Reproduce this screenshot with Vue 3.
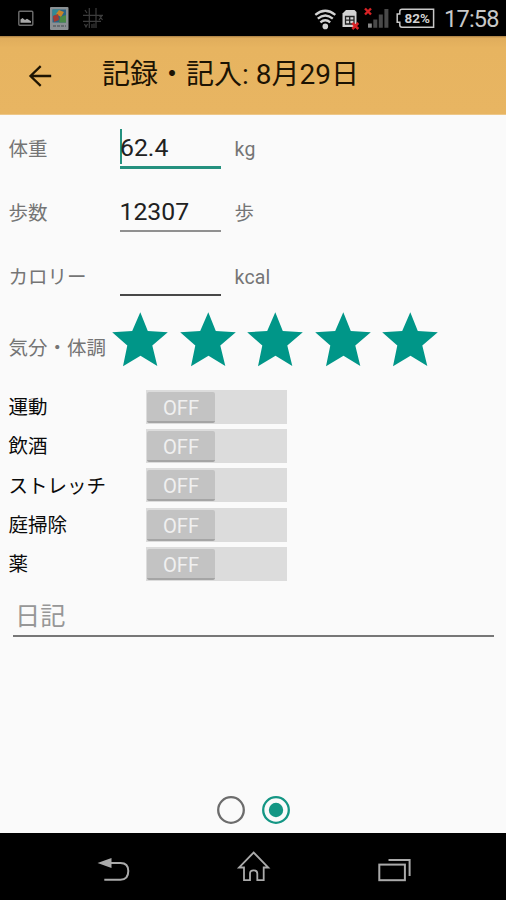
<script setup>
import { ref } from 'vue'

const fields = ref([
  { label: '体重', value: '62.4', unit: 'kg', state: 'focused' },
  { label: '歩数', value: '12307', unit: '歩', state: 'filled' },
  { label: 'カロリー', value: '', unit: 'kcal', state: 'empty' },
])
const habits = ref(['運動', '飲酒', 'ストレッチ', '庭掃除', '薬'])
const rating = ref(5)
</script>

<template>
  <div class="screen">
    <header class="status">
      <svg class="status-left" width="110" height="36" viewBox="0 0 110 36">
        <rect x="18.8" y="11.3" width="14" height="14" rx="1" fill="none" stroke="#6e6e6e" stroke-width="1.4" />
        <path d="M20.5 22.8V19.5L22.5 18L25 20L27 18.8L31 21.3V22.8Z" fill="#aaa" />
        <rect x="50" y="7" width="18.5" height="23" rx="1" fill="#8b9093" />
        <rect x="52.5" y="9.5" width="13.5" height="13" fill="#2a6488" />
        <path d="M52.5 9.5H60L57 15L52.5 16Z" fill="#318a96" />
        <path d="M59 10L64 12L61 17L56 14Z" fill="#c98427" />
        <path d="M53 16L58 14L59 20L54 22Z" fill="#a53a30" />
        <path d="M60 17L66 15V22.5H59Z" fill="#4a8a45" />
        <path d="M53 26H66" stroke="#666c70" stroke-width="1.8" stroke-dasharray="3 1" />
        <g stroke="#3c3c3c" stroke-width="1.2" fill="none">
          <path d="M83 15.3H103M83 21.3H101M89.3 8V28M96 8V28M99 15L102.5 20M102.5 15L99 20M85 10L87 13M84.5 24L86 27L87.5 24M92 24V28M94 23.5V28" />
        </g>
      </svg>
      <svg class="status-icons" width="140" height="36" viewBox="300 0 140 36">
        <g fill="none" stroke="#d2d2d2" stroke-width="2.3">
          <path d="M315.3 14.8Q325.3 6.8 335.3 14.8" />
          <path d="M317.8 18.7Q325.3 12.3 332.8 18.7" />
          <path d="M320.4 22.4Q325.3 18.1 330.2 22.4" />
        </g>
        <circle cx="325.3" cy="26.4" r="2.8" fill="#d2d2d2" />
        <path d="M346 10H354.5L356.5 12V27H342.5V13.5Z" fill="#d2d2d2" />
        <path d="M345.5 16.5H354V24H345.5ZM345.5 20.2H354M349.7 16.5V24" fill="none" stroke="#222" stroke-width="1.3" />
        <path d="M352.3 23L358.3 29M358.3 23L352.3 29" stroke="#d82225" stroke-width="2.5" />
        <path d="M365 8.5L371 14.5M371 8.5L365 14.5" stroke="#d82225" stroke-width="2.4" />
        <rect x="368" y="23.5" width="3.8" height="4.2" fill="#888" />
        <path d="M373.3 27.7V19.5H377.3V27.7ZM378.8 27.7V14.5H382.8V27.7ZM384.4 27.7V9H388.4V27.7Z" fill="#494949" />
        <path d="M402 9.2H433.6V27.2H402Q399.8 27.2 399.8 25V22.2H397.2V14H399.8V11.4Q399.8 9.2 402 9.2Z" fill="none" stroke="#c8c8c8" stroke-width="1.5" />
        <text class="battery" x="417.3" y="23.4" text-anchor="middle">82%</text>
      </svg>
      <span class="clock">17:58</span>
    </header>

    <div class="appbar">
      <svg class="back" width="24" height="24" viewBox="0 0 24 24">
        <path d="M23.2 12H2.5M12.7 2.2L2.5 12L12.7 21.8" fill="none" stroke="#1f1503" stroke-width="2.3" />
      </svg>
      <h1>記録・記入: 8月29日</h1>
    </div>

    <main>
      <div v-for="f in fields" :key="f.label" class="field">
        <span class="label">{{ f.label }}</span>
        <div class="input" :class="f.state"><span>{{ f.value }}</span></div>
        <span class="unit">{{ f.unit }}</span>
      </div>

      <div class="mood">
        <span class="label">気分・体調</span>
        <div class="stars">
          <svg v-for="n in rating" :key="n" width="56" height="56" viewBox="0 0 56 56">
            <path d="M28.3 .3L35.8 19L55.8 20.2L40.3 33.5L45.3 54L28.5 43.7L11 54.2L15.3 33.5L.2 20.2L20.2 19Z" fill="#009688" />
          </svg>
        </div>
      </div>

      <div class="habits">
        <div v-for="h in habits" :key="h" class="habit">
          <span>{{ h }}</span>
          <div class="switch"><div class="thumb">OFF</div></div>
        </div>
      </div>

      <div class="diary">日記</div>

      <div class="pages">
        <svg width="28" height="28" viewBox="0 0 28 28">
          <circle cx="14" cy="14" r="12.8" fill="none" stroke="#6c6c6c" stroke-width="2.3" />
        </svg>
        <svg width="28" height="28" viewBox="0 0 28 28">
          <circle cx="14" cy="14" r="12.8" fill="none" stroke="#149684" stroke-width="2.3" />
          <circle cx="14" cy="14" r="7.2" fill="#149684" />
        </svg>
      </div>
    </main>

    <nav>
      <svg width="506" height="67" viewBox="0 833 506 67">
        <g fill="none" stroke="#aaa" stroke-width="2">
          <path d="M109 863H120.5Q128.3 863 128.3 871Q128.3 879.7 120.5 879.7H104.3" />
          <path d="M253.6 852.5L268.3 867.5H263.7V880.2H257.3V873.5Q257.3 870.3 253.6 870.3Q250 870.3 250 873.5V880.2H244V867.5H239Z" stroke-width="1.8" />
          <rect x="379.3" y="864.6" width="25.6" height="15.6" />
          <path d="M388.5 860H409.6V876" />
        </g>
        <path d="M97.5 863L111.5 858V868Z" fill="#aaa" />
      </svg>
    </nav>
  </div>
</template>

<style>
body {
  margin: 0;
  background: #fafafa;
}
</style>

<style scoped>
.screen {
  display: flex;
  flex-direction: column;
  width: 506px;
  height: 900px;
  overflow: hidden;
  background: #fafafa;
  font-family: Roboto, "Noto Sans CJK JP", sans-serif;
}
svg {
  display: block;
  flex: none;
}
.status {
  display: flex;
  flex: none;
  height: 36px;
  background: #000;
}
.status-icons {
  margin-left: 190px;
}
.battery {
  font-size: 13.5px;
  font-weight: 700;
  fill: #d2d2d2;
}
.clock {
  margin-left: 4px;
  color: #c8c8c8;
  font-size: 23.5px;
  line-height: 39px;
  letter-spacing: -0.75px;
  white-space: nowrap;
}
.appbar {
  display: flex;
  flex: none;
  box-sizing: border-box;
  height: 79px;
  padding: 0 28px;
  background: linear-gradient(#a37b43 0, #e0ad5c 2px, #e7b460 12px, #e8b562 78px, #f3d9ae 79px);
}
.back {
  margin-top: 27.5px;
}
h1 {
  margin: 0 0 0 50px;
  color: #1c1303;
  font-size: 28px;
  font-weight: 400;
  line-height: 78px;
  white-space: nowrap;
}
main {
  display: flex;
  flex: 1;
  flex-direction: column;
}
.field {
  display: grid;
  grid-template-columns: 111px 101px 1fr;
  height: 64px;
  padding-left: 8.5px;
}
.label,
.unit {
  color: #757575;
  font-size: 19.5px;
  line-height: 70px;
  white-space: nowrap;
}
.unit {
  padding-left: 14px;
  letter-spacing: 0.2px;
}
.input {
  box-sizing: border-box;
  height: 53px;
  border-bottom: 2px solid #909090;
  color: #212121;
  font-size: 24.8px;
  line-height: 65px;
}
.input.empty {
  border-bottom-color: #484848;
}
.input.focused {
  height: 54px;
  border-bottom: 3px solid #24917f;
}
.input.focused span {
  display: block;
  height: 35px;
  margin-top: 14px;
  border-left: 2px solid #24917f;
  line-height: 38px;
  text-indent: -1.5px;
}
.mood {
  display: flex;
  height: 82px;
  padding-left: 8.5px;
}
.mood .label {
  width: 103.5px;
  line-height: 83px;
}
.stars {
  display: flex;
  gap: 11.5px;
  padding-top: 5px;
}
.habit {
  display: flex;
  height: 39.3px;
  padding-left: 8.5px;
  color: #0a0a0a;
  font-size: 19.5px;
  line-height: 38px;
}
.habit > span {
  width: 137.5px;
}
.switch {
  box-sizing: border-box;
  width: 141px;
  height: 34px;
  margin-top: .8px;
  padding: 2px 1px 1px;
  background: #dcdcdc;
}
.thumb {
  box-sizing: border-box;
  width: 68px;
  height: 31px;
  border-bottom: 2px solid #a5a5a5;
  border-radius: 2px;
  background: #c3c3c3;
  color: #f0f0f0;
  font-size: 20.2px;
  font-weight: 400;
  line-height: 33px;
  text-align: center;
}
.diary {
  box-sizing: border-box;
  height: 50px;
  margin: 2px 12px 0 13px;
  border-bottom: 2px solid #777;
  color: #979797;
  font-size: 25.2px;
  line-height: 60px;
  text-indent: 2px;
}
.pages {
  display: flex;
  justify-content: center;
  gap: 17px;
  margin-top: auto;
  padding-bottom: 9px;
}
nav {
  flex: none;
  height: 67px;
  background: #000;
}
</style>
